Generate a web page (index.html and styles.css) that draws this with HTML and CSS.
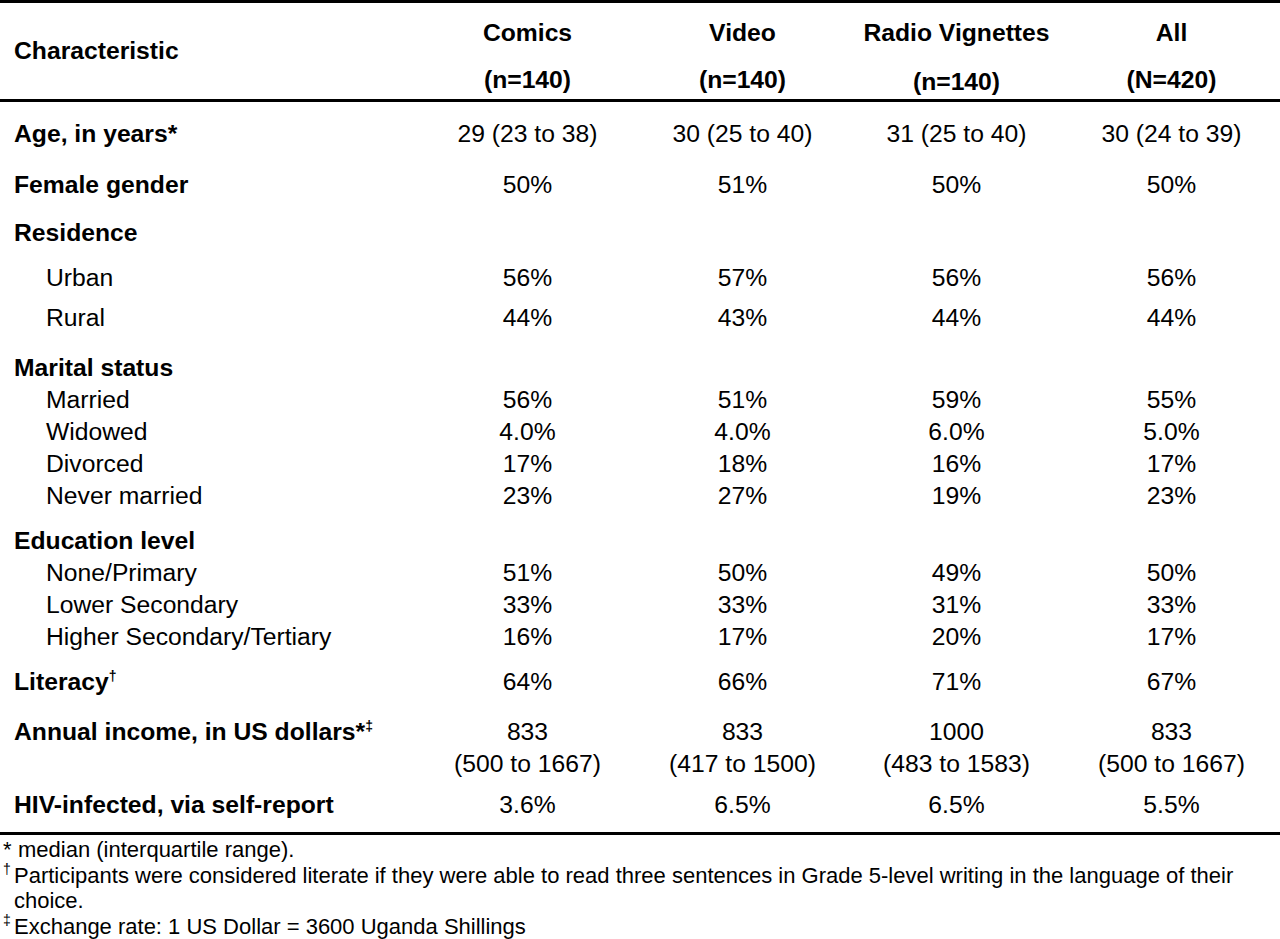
FILE: index.html
```html
<!DOCTYPE html>
<html lang="en">
<head>
<meta charset="utf-8">
<title>Participant characteristics</title>
<link rel="stylesheet" href="styles.css">
</head>
<body>
<table class="chars">
  <colgroup>
    <col class="c-label">
    <col class="c-a">
    <col class="c-b">
    <col class="c-c">
    <col class="c-d">
  </colgroup>
  <thead>
    <tr>
      <th class="label head-label">Characteristic</th>
      <th><div class="h1">Comics</div><div class="h2">(n=140)</div></th>
      <th><div class="h1">Video</div><div class="h2">(n=140)</div></th>
      <th><div class="h1">Radio Vignettes</div><div class="h2 low">(n=140)</div></th>
      <th><div class="h1">All</div><div class="h2">(N=420)</div></th>
    </tr>
  </thead>
  <tbody>
    <tr class="p16"><td class="label">Age, in years*</td><td>29 (23 to 38)</td><td>30 (25 to 40)</td><td>31 (25 to 40)</td><td>30 (24 to 39)</td></tr>
    <tr class="p19"><td class="label">Female gender</td><td>50%</td><td>51%</td><td>50%</td><td>50%</td></tr>
    <tr class="p16"><td class="label">Residence</td><td></td><td></td><td></td><td></td></tr>
    <tr class="p13"><td class="sub">Urban</td><td>56%</td><td>57%</td><td>56%</td><td>56%</td></tr>
    <tr class="p8"><td class="sub">Rural</td><td>44%</td><td>43%</td><td>44%</td><td>44%</td></tr>
    <tr class="p18"><td class="label">Marital status</td><td></td><td></td><td></td><td></td></tr>
    <tr><td class="sub">Married</td><td>56%</td><td>51%</td><td>59%</td><td>55%</td></tr>
    <tr><td class="sub">Widowed</td><td>4.0%</td><td>4.0%</td><td>6.0%</td><td>5.0%</td></tr>
    <tr><td class="sub">Divorced</td><td>17%</td><td>18%</td><td>16%</td><td>17%</td></tr>
    <tr><td class="sub">Never married</td><td>23%</td><td>27%</td><td>19%</td><td>23%</td></tr>
    <tr class="p13"><td class="label">Education level</td><td></td><td></td><td></td><td></td></tr>
    <tr><td class="sub">None/Primary</td><td>51%</td><td>50%</td><td>49%</td><td>50%</td></tr>
    <tr><td class="sub">Lower Secondary</td><td>33%</td><td>33%</td><td>31%</td><td>33%</td></tr>
    <tr><td class="sub">Higher Secondary/Tertiary</td><td>16%</td><td>17%</td><td>20%</td><td>17%</td></tr>
    <tr class="p13"><td class="label">Literacy<sup>†</sup></td><td>64%</td><td>66%</td><td>71%</td><td>67%</td></tr>
    <tr class="p18"><td class="label">Annual income, in US dollars<span class="mk">*<sup>‡</sup></span></td><td>833<br>(500 to 1667)</td><td>833<br>(417 to 1500)</td><td>1000<br>(483 to 1583)</td><td>833<br>(500 to 1667)</td></tr>
    <tr class="p9 last"><td class="label">HIV-infected, via self-report</td><td>3.6%</td><td>6.5%</td><td>6.5%</td><td>5.5%</td></tr>
  </tbody>
</table>
<div class="notes">
  <p class="note first"><span class="nm">*</span>median (interquartile range).</p>
  <p class="note"><span class="nm sup">†</span>Participants were considered literate if they were able to read three sentences in Grade 5-level writing in the language of their choice.</p>
  <p class="note"><span class="nm sup">‡</span>Exchange rate: 1 US Dollar = 3600 Uganda Shillings</p>
</div>
</body>
</html>
```

FILE: styles.css
```css
html, body {
  margin: 0;
  padding: 0;
  background: #ffffff;
}

body {
  color: #000000;
  font-family: "Liberation Sans", Arial, sans-serif;
  width: 1280px;
}

.chars {
  width: 1280px;
  border-collapse: collapse;
  table-layout: fixed;
  font-size: 24.7px;
  line-height: 32px;
}

.c-label { width: 420px; }
.c-a { width: 215px; }
.c-b { width: 215px; }
.c-c { width: 213px; }
.c-d { width: 217px; }

.chars thead tr {
  border-top: 3px solid #000;
  border-bottom: 3px solid #000;
}

.chars th {
  font-weight: bold;
  text-align: center;
  vertical-align: top;
  padding: 0;
}

.chars th .h1 {
  line-height: 34px;
  padding-top: 13px;
}

.chars th .h2 {
  line-height: 34px;
  margin-top: 13px;
  padding-bottom: 2px;
}

.chars th .h2.low {
  margin-top: 15px;
  padding-bottom: 0;
}

.chars th.head-label {
  text-align: left;
  padding-top: 31px;
  line-height: 34px;
}

.chars td {
  padding: 0;
  text-align: center;
  vertical-align: top;
  white-space: nowrap;
}

.chars td.label,
.chars th.label {
  text-align: left;
  padding-left: 14px;
  font-weight: bold;
}

.chars td.sub {
  text-align: left;
  padding-left: 46px;
}

.chars tr.p8 td { padding-top: 8px; }
.chars tr.p9 td { padding-top: 9px; }
.chars tr.p13 td { padding-top: 13px; }
.chars tr.p16 td { padding-top: 16px; }
.chars tr.p18 td { padding-top: 18px; }
.chars tr.p19 td { padding-top: 19px; }

.chars tr.last td { padding-bottom: 11px; }

.chars tbody {
  border-bottom: 3px solid #000;
}

.chars sup {
  font-size: 14px;
  line-height: 0;
  vertical-align: 9px;
}

.chars .mk {
  font-weight: bold;
}

.notes {
  margin-top: 2px;
  font-size: 22px;
  line-height: 25.6px;
  padding-right: 20px;
}

.note {
  margin: 0;
  padding-left: 14px;
  position: relative;
}

.note.first {
  padding-left: 18px;
}

.note .nm {
  position: absolute;
  left: 3px;
  top: 0;
}

.note .nm.sup {
  font-size: 14px;
  top: -6px;
}
```
